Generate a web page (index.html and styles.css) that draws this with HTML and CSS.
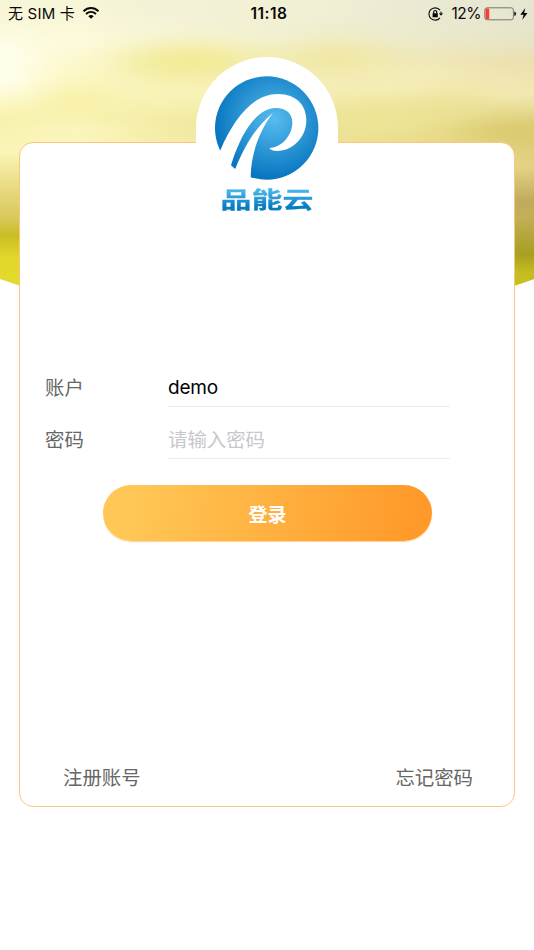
FILE: index.html
```html
<!DOCTYPE html>
<html lang="zh-CN">
<head>
<meta charset="utf-8">
<title>品能云</title>
<link rel="stylesheet" href="styles.css">
</head>
<body>
<main class="screen">
  <svg class="backdrop" width="534" height="310" viewBox="0 0 534 310" aria-hidden="true">
    <defs>
      <clipPath id="hill"><path d="M0 0H534V279Q400 327 267 327T0 279Z"/></clipPath>
      <linearGradient id="leftSky" x2="0" y2="1">
        <stop offset="0" stop-color="#f7f5d8"/><stop offset=".14" stop-color="#fcfad9"/><stop offset=".3" stop-color="#fbf6bb"/><stop offset=".39" stop-color="#f8f1ac"/><stop offset=".49" stop-color="#faf5b8"/><stop offset=".6" stop-color="#e9dc83"/><stop offset=".7" stop-color="#d8ca5c"/><stop offset=".76" stop-color="#cabd22"/><stop offset=".83" stop-color="#e2d72b"/><stop offset="1" stop-color="#e4dd29"/>
      </linearGradient>
      <linearGradient id="rightSky" x2="0" y2="1">
        <stop offset="0" stop-color="#e5e5d2"/><stop offset=".12" stop-color="#e6e4c8"/><stop offset=".2" stop-color="#ebe0ae"/><stop offset=".3" stop-color="#f1e8b2"/><stop offset=".42" stop-color="#dfd078"/><stop offset=".54" stop-color="#e3d183"/><stop offset=".65" stop-color="#c0a85c"/><stop offset=".7" stop-color="#c4ad59"/><stop offset=".82" stop-color="#a59e22"/><stop offset=".88" stop-color="#c4bb20"/><stop offset="1" stop-color="#ccc51c"/>
      </linearGradient>
      <linearGradient id="fade"><stop offset=".15" stop-color="#000"/><stop offset="1" stop-color="#fff"/></linearGradient>
      <mask id="rightMask"><rect width="534" height="310" fill="url(#fade)"/></mask>
      <filter id="soft" filterUnits="userSpaceOnUse" x="-100" y="-60" width="734" height="300"><feGaussianBlur stdDeviation="24 11"/></filter>
    </defs>
    <g clip-path="url(#hill)">
      <rect width="534" height="310" fill="url(#leftSky)"/>
      <rect width="534" height="310" fill="url(#rightSky)" mask="url(#rightMask)"/>
      <g filter="url(#soft)">
        <ellipse cx="0" cy="68" rx="38" ry="32" fill="#fffff0"/>
        <ellipse cx="190" cy="62" rx="70" ry="16" fill="#f1ea91"/>
        <ellipse cx="78" cy="101" rx="30" ry="10" fill="#f5ed9c"/>
        <ellipse cx="78" cy="134" rx="50" ry="8" fill="#fdf8c8"/>
        <ellipse cx="335" cy="58" rx="55" ry="14" fill="#f0e7a0"/>
        <ellipse cx="240" cy="5" rx="140" ry="10" fill="#f3f2d6"/>
        <ellipse cx="410" cy="77" rx="45" ry="9" fill="#f7efba"/>
        <ellipse cx="450" cy="101" rx="35" ry="8" fill="#e9df8b"/>
        <ellipse cx="370" cy="122" rx="75" ry="18" fill="#eee496"/>
        <ellipse cx="520" cy="132" rx="45" ry="12" fill="#d8c76c"/>
      </g>
    </g>
  </svg>

  <header class="status">
    <div class="carrier"><span>无 SIM 卡</span>
      <svg width="18" height="14" viewBox="0 0 18 14" aria-hidden="true">
        <path d="M1.500 5.200C6 .9 12 .9 16.500 5.200M4 8C7 5.200 11 5.200 14 8" fill="none" stroke="#080808" stroke-width="1.900"/>
        <path d="M6.300 10.200Q9 7.900 11.700 10.200L9 12.700Z" fill="#080808"/>
      </svg>
    </div>
    <time class="clock">11:18</time>
    <div class="power">
      <svg class="lock" width="16" height="14" viewBox="0 0 16 14" aria-hidden="true">
        <path d="M12 3.200A6.200 6.200 0 0 0 1 7A6.200 6.200 0 0 0 12 10.800M12.800 4.600L13.200 6" fill="none" stroke="#080808" stroke-width="1.100"/>
        <path d="M10.900 6.300H15.100L13 8.800ZM4.600 6.200H9.800V10.200H4.600Z" fill="#080808"/>
        <path d="M5.700 6.500V5A1.500 1.500 0 0 1 8.700 5V6.500" fill="none" stroke="#080808" stroke-width="1.200"/>
      </svg>
      <span class="percent">12%</span>
      <svg class="battery" width="33" height="14" viewBox="0 0 33 14" aria-hidden="true">
        <rect x=".8" y=".8" width="28.600" height="12" rx="2.300" fill="none" stroke="#77776d"/>
        <path d="M2.700 1.500H5.200V12.100H2.700Q1.500 12.100 1.500 10.900V2.700Q1.500 1.500 2.700 1.500Z" fill="#fb3b34"/>
        <path d="M30.200 4.500Q32.200 5 32.200 6.800T30.200 9.100Z" fill="#222"/>
      </svg>
      <svg class="bolt" width="8" height="12" viewBox="0 0 8 12" aria-hidden="true"><path d="M5.300 0L.3 6.700H3.600L2.200 12L7.500 4.900H4.200Z" fill="#080808"/></svg>
    </div>
  </header>

  <section class="card">
    <div class="brand">
      <svg class="mark" width="104" height="104" viewBox="76 78 312 312" aria-hidden="true">
        <defs><radialGradient id="blue" gradientUnits="userSpaceOnUse" cx="253" cy="207" r="178"><stop stop-color="#57bdf0"/><stop offset=".48" stop-color="#319ad7"/><stop offset="1" stop-color="#0876c0"/></radialGradient></defs>
        <circle cx="231" cy="234" r="155" fill="url(#blue)"/>
        <path d="M92 301C132 207 190 132 264 132C322 132 350 167 350 211C350 265 306 303 263 303C251 303 242 300 239 294C278 292 308 254 308 218C308 190 289 174 258 174C205 175 157 240 124 346L108 370L75 330Z" fill="#fff"/>
        <path d="M137 356C165 289 194 235 250 188C209 242 184 310 183 382L181 400L120 380Z" fill="#fff"/>
      </svg>
      <span class="wordmark">品能云</span>
    </div>
    <form class="login">
      <label class="field"><span class="name">账户</span><input type="text" value="demo"></label>
      <label class="field"><span class="name">密码</span><input type="password" placeholder="请输入密码"></label>
      <button type="button" class="submit">登录</button>
    </form>
    <nav class="links"><a>注册账号</a><a>忘记密码</a></nav>
  </section>
</main>
</body>
</html>
```
FILE: styles.css
```css
* { box-sizing: border-box; }
body { margin: 0; background: #fff; font-family: Inter, "Noto Sans CJK SC", sans-serif; color: #666; }
.screen { position: relative; height: 950px; overflow: hidden; }
.backdrop { position: absolute; top: 0; left: 0; display: block; }
.status { position: relative; height: 28px; display: grid; grid-template-columns: 1fr auto 1fr; align-items: center; padding: 0 6px 0 8px; color: #080808; line-height: 28px; white-space: nowrap; }
.carrier, .power { display: flex; align-items: center; }
.carrier { gap: 7px; font-size: 15px; letter-spacing: .2px; }
.carrier svg { margin-top: -3px; }
.clock { font-size: 15.500px; font-weight: 600; letter-spacing: .5px; padding-left: 2px; }
.power { justify-content: flex-end; }
.lock { margin-right: 8px; margin-top: -1px; }
.percent { font-size: 15.500px; letter-spacing: -.5px; }
.battery { margin-left: 3px; }
.bolt { margin-left: 3px; }
.card { position: relative; width: 496px; height: 665px; margin: 114px 0 0 19px; border: 1px solid #fdc67e; border-radius: 14px; background: #fff; display: flex; flex-direction: column; }
.brand { width: 142px; height: 170px; margin: -86px auto 0 176px; border-radius: 71px 71px 0 0; background: #fff; display: flex; flex-direction: column; align-items: center; padding-top: 19px; }
.mark { display: block; }
.wordmark { margin-top: 1px; font: 700 26px/36px "Noto Sans CJK SC", sans-serif; transform: scale(1.190, .86); color: transparent; background: linear-gradient(#43b4e8 25%, #087bc3 75%); background-clip: text; -webkit-background-clip: text; -webkit-text-stroke: .3px transparent; }
.login { margin: 135px 0 0 25px; display: flex; flex-direction: column; }
.field { display: flex; align-items: center; height: 52px; font-size: 19.400px; line-height: 38px; }
.name { width: 123px; }
.field input { width: 282px; height: 38px; margin: 0; padding: 0; border: 0; border-bottom: 1px solid #ededed; outline: 0; background: transparent; font: inherit; color: #000; }
.field input[type="text"] { font-size: 19px; letter-spacing: -.2px; }
.field input::placeholder { color: #c7c7cd; opacity: 1; }
.submit { width: 329px; height: 56px; margin: 19px 0 0 58px; padding: 1px 0 0; border: 0; border-radius: 28px; background: linear-gradient(100deg, #ffc856 8%, #ff9929 95%); box-shadow: 0 1px 1px #ffd18f; color: #fff; font: 700 19px/54px "Noto Sans CJK SC", sans-serif; }
.links { display: flex; justify-content: space-between; margin: auto 41px 13px 43px; font-size: 19.400px; line-height: 30px; }
```
